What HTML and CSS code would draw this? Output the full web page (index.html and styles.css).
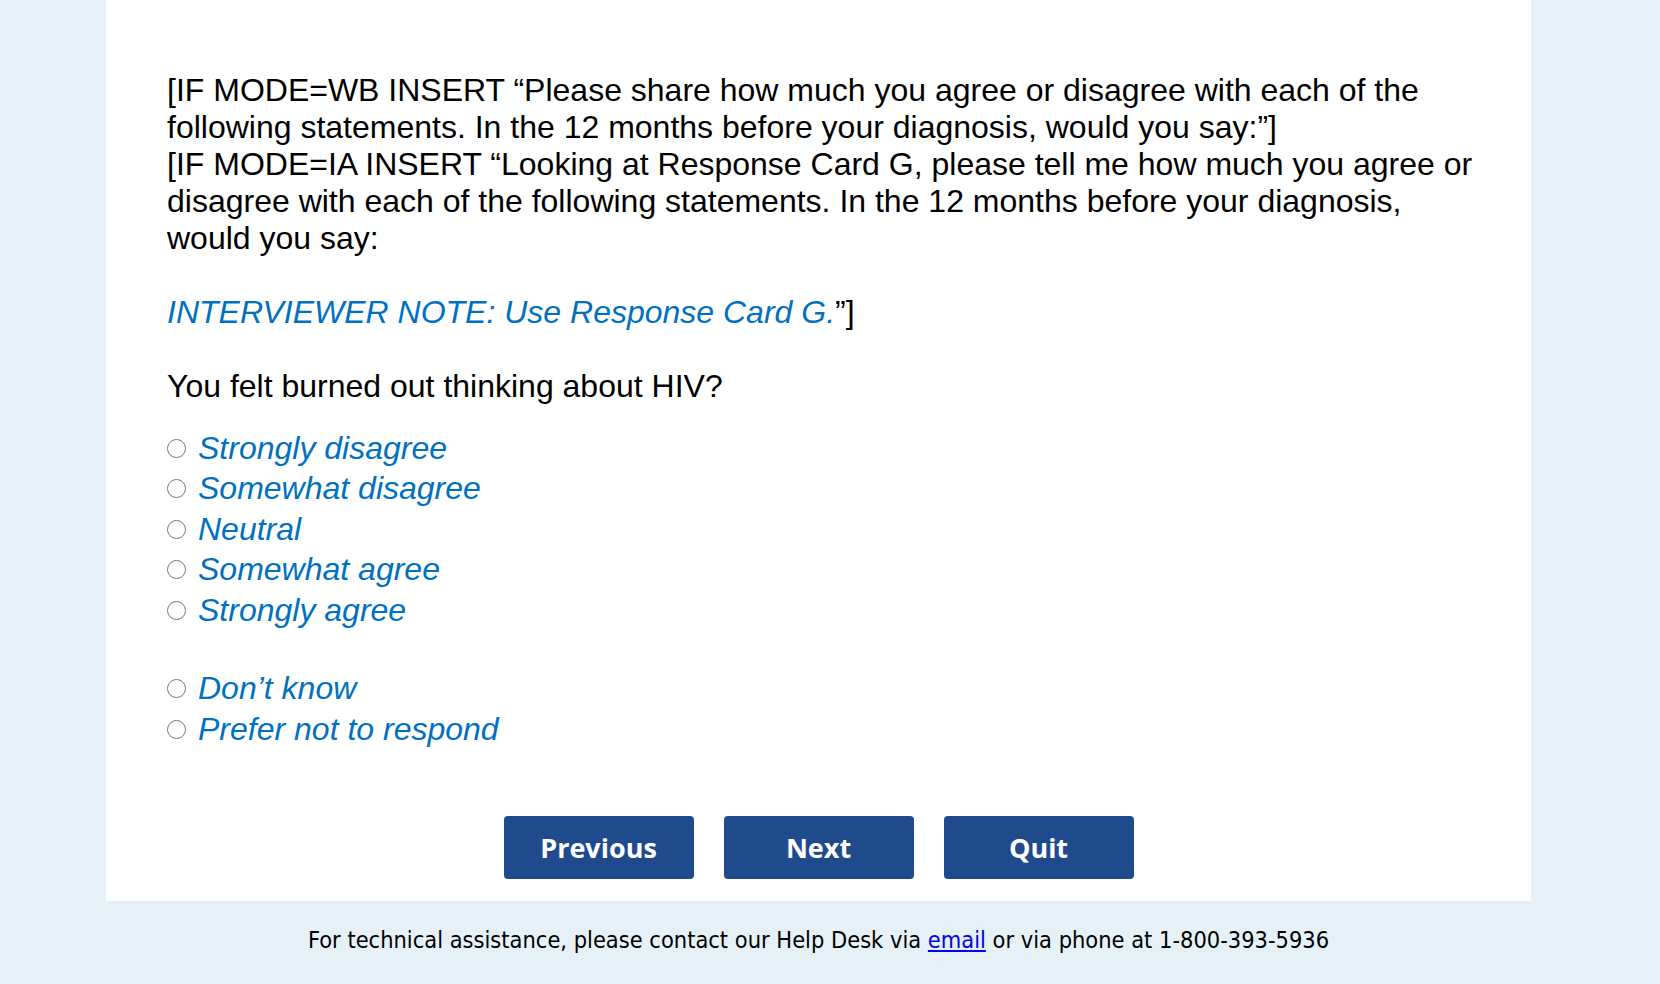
FILE: index.html
```html
<!DOCTYPE html>
<html lang="en">
<head>
<meta charset="utf-8">
<title>Survey</title>
<link rel="stylesheet" href="styles.css">
</head>
<body>
<main class="panel">
  <div class="question-text">
    [IF MODE=WB INSERT “Please share how much you agree or disagree with each of the following statements. In the 12 months before your diagnosis, would you say:”]<br>
    [IF MODE=IA INSERT “Looking at Response Card G, please tell me how much you agree or disagree with each of the following statements. In the 12 months before your diagnosis, would you say:<br><br>
    <span class="note">INTERVIEWER NOTE: Use Response Card G.</span>”]<br><br>
    You felt burned out thinking about HIV?
  </div>
  <div class="options">
    <label class="option"><input type="radio" name="q"><span>Strongly disagree</span></label>
    <label class="option"><input type="radio" name="q"><span>Somewhat disagree</span></label>
    <label class="option"><input type="radio" name="q"><span>Neutral</span></label>
    <label class="option"><input type="radio" name="q"><span>Somewhat agree</span></label>
    <label class="option"><input type="radio" name="q"><span>Strongly agree</span></label>
    <div class="spacer"></div>
    <label class="option"><input type="radio" name="q"><span>Don’t know</span></label>
    <label class="option"><input type="radio" name="q"><span>Prefer not to respond</span></label>
  </div>
  <div class="buttons">
    <button class="btn" type="button">Previous</button>
    <button class="btn" type="button">Next</button>
    <button class="btn" type="button">Quit</button>
  </div>
</main>
<footer class="footer">
  For technical assistance, please contact our Help Desk via <a href="#">email</a> or via phone at 1-800-393-5936
</footer>
</body>
</html>
```

FILE: styles.css
```css
html, body {
  margin: 0;
  padding: 0;
}
body {
  background: #e6f1f7;
  font-family: "Liberation Sans", Arial, sans-serif;
  color: #000;
}
.panel {
  width: 1425px;
  margin-left: 106px;
  background: #fff;
  box-sizing: border-box;
  padding: 72px 48px 22px 61px;
}
.question-text {
  font-size: 32px;
  line-height: 37px;
}
.note {
  color: #0070c0;
  font-style: italic;
}
.options {
  margin-top: 23px;
  display: flex;
  flex-direction: column;
}
.option {
  display: flex;
  align-items: center;
  height: 40.5px;
  font-size: 32px;
  font-style: italic;
  color: #0070c0;
}
.option input {
  width: 19px;
  height: 19px;
  margin: 0 12px 0 0;
  flex: none;
}
.spacer {
  height: 38px;
}
.buttons {
  margin-top: 66px;
  display: flex;
  justify-content: center;
  gap: 30px;
  padding-right: 13px;
}
.btn {
  width: 190px;
  height: 63px;
  background: #1f4a8c;
  color: #fff;
  border: none;
  border-radius: 4px;
  font-family: "Open Sans", sans-serif;
  font-weight: 700;
  font-size: 27px;
  cursor: pointer;
}
.footer {
  box-sizing: border-box;
  width: 1425px;
  margin-left: 106px;
  height: 83px;
  padding-top: 22px;
  line-height: 34px;
  text-align: center;
  font-family: "DejaVu Sans Condensed", "DejaVu Sans", sans-serif;
  font-size: 23.4px;
  color: #000;
}
.footer a {
  color: #0000ee;
}
```
